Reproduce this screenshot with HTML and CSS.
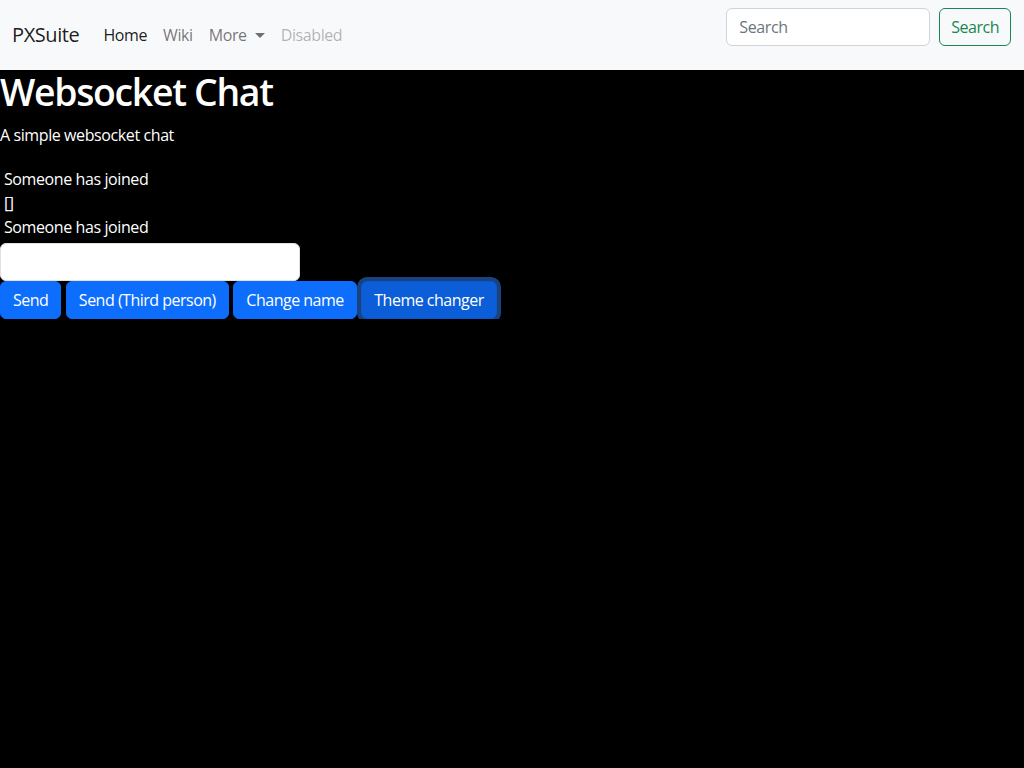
FILE: index.html
```html
<!DOCTYPE html>
<html lang="en">
<head>
<meta charset="utf-8">
<title>Websocket Chat</title>
<link rel="stylesheet" href="styles.css">
</head>
<body>
<nav class="navbar">
  <a class="brand" href="#">PXSuite</a>
  <ul class="nav">
    <li><a class="nav-link active" href="#">Home</a></li>
    <li><a class="nav-link" href="#">Wiki</a></li>
    <li><a class="nav-link dropdown" href="#">More<span class="caret"></span></a></li>
    <li><a class="nav-link disabled" href="#">Disabled</a></li>
  </ul>
  <form class="search">
    <input class="search-input" type="search" placeholder="Search">
    <button class="btn-outline" type="button">Search</button>
  </form>
</nav>
<main class="main">
  <h1 class="title">Websocket Chat</h1>
  <p class="lead">A simple websocket chat</p>
  <div class="messages">
    <div class="msg">Someone has joined</div>
    <div class="msg">[]</div>
    <div class="msg">Someone has joined</div>
  </div>
  <input class="chat-input" type="text">
  <div class="actions">
    <button class="btn" type="button">Send</button>
    <button class="btn" type="button">Send (Third person)</button>
    <button class="btn" type="button">Change name</button>
    <button class="btn focused" type="button">Theme changer</button>
  </div>
</main>
</body>
</html>
```
FILE: styles.css
```css
* { box-sizing: border-box; }
html, body { margin: 0; padding: 0; }
body {
  background: #000;
  color: #fff;
  font-family: "Open Sans", "Noto Sans", sans-serif;
  font-size: 16px;
  line-height: 1.5;
  letter-spacing: -0.4px;
}
.navbar {
  display: flex;
  align-items: center;
  height: 70px;
  padding: 0 12px;
  background: #f8f9fa;
}
.brand {
  font-size: 20px;
  color: rgba(0,0,0,.9);
  text-decoration: none;
  margin-right: 16px;
  line-height: 30px;
}
.nav {
  display: flex;
  list-style: none;
  margin: 0;
  padding: 0;
  flex: 1;
}
.nav-link {
  display: block;
  padding: 8px;
  color: rgba(0,0,0,.55);
  text-decoration: none;
}
.nav-link.active { color: rgba(0,0,0,.9); }
.nav-link.disabled { color: rgba(0,0,0,.3); }
.caret {
  display: inline-block;
  margin-left: 8px;
  vertical-align: 3px;
  border-top: 5px solid;
  border-left: 5px solid transparent;
  border-right: 5px solid transparent;
}
.search {
  display: flex;
  align-self: flex-start;
  margin-top: 8px;
  gap: 9px;
  margin-right: 1px;
}
.search-input {
  width: 204px;
  height: 38px;
  padding: 6px 12px;
  font: inherit;
  letter-spacing: inherit;
  color: #212529;
  background: #fff;
  border: 1px solid #ced4da;
  border-radius: 6px;
}
.search-input::placeholder { color: #6c757d; }
.btn-outline {
  height: 38px;
  padding: 6px 11px;
  font: inherit;
  letter-spacing: -0.5px;
  color: #198754;
  background: transparent;
  border: 1px solid #198754;
  border-radius: 6px;
}
.main { padding: 0; }
.title {
  margin: 0 0 8px;
  font-size: 37.36px;
  font-weight: 600;
  line-height: 1.2;
  letter-spacing: -1.3px;
}
.lead { margin: 0 0 16px; }
.messages { padding: 4px; }
.chat-input {
  display: block;
  width: 300px;
  height: 38px;
  border: 1px solid #dee2e6;
  border-radius: 6px;
  background: #fff;
  font: inherit;
  padding: 6px 12px;
}
.actions {
  display: flex;
  gap: 4.5px;
}
.btn {
  height: 38px;
  padding: 6px 12px;
  font: inherit;
  letter-spacing: -0.5px;
  color: #fff;
  background: #0d6efd;
  border: 1px solid #0d6efd;
  border-radius: 6px;
}
.btn.focused {
  background: #0b5ed7;
  border-color: #0a58ca;
  box-shadow: 0 0 0 4px rgba(49,132,253,.5);
}
```
